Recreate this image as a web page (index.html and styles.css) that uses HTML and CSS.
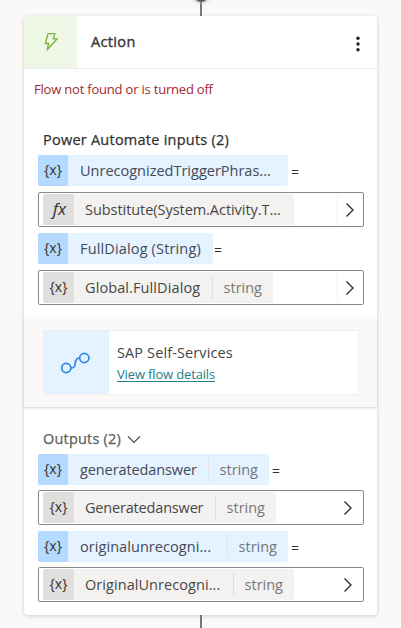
FILE: index.html
```html
<!DOCTYPE html>
<html lang="en">
<head>
<meta charset="utf-8">
<title>Action</title>
<link rel="stylesheet" href="styles.css">
</head>
<body>
<div class="connector top"></div>
<main class="card">
  <header class="header">
    <div class="header-icon">
      <svg width="16" height="20" viewBox="0 0 16 20"><path d="M5 1.6h7l-1.8 5.2h4L4.1 17.8l1.6-6.3H2.3z" fill="none" stroke="#76b43c" stroke-width="1.3" stroke-linejoin="round"/></svg>
    </div>
    <h1 class="title"><span class="t-action">Action</span></h1>
    <svg class="more" width="6" height="18" viewBox="0 0 6 18"><circle cx="3" cy="3.3" r="1.7"/><circle cx="3" cy="9" r="1.7"/><circle cx="3" cy="14.7" r="1.7"/></svg>
  </header>
  <p class="error"><span class="t-error">Flow not found or is turned off</span></p>
  <section class="inputs">
    <h2 class="heading"><span class="t-inputs">Power Automate inputs (2)</span></h2>
    <div class="param"><div class="token w250"><i class="var">{x}</i><span class="label t-unrec">UnrecognizedTriggerPhras...</span></div><span class="equals">=</span></div>
    <div class="field"><div class="token gray w251"><i class="var fx">fx</i><span class="label t-subst">Substitute(System.Activity.T...</span></div><div class="open"><svg width="10" height="16" viewBox="0 0 10 16"><path d="M1.5 1.5L8 8l-6.5 6.5"/></svg></div></div>
    <div class="param"><div class="token w175"><i class="var">{x}</i><span class="label t-full">FullDialog (String)</span></div><span class="equals near">=</span></div>
    <div class="field"><div class="token gray w230"><i class="var">{x}</i><span class="label t-global">Global.FullDialog</span><span class="type">string</span></div><div class="open"><svg width="10" height="16" viewBox="0 0 10 16"><path d="M1.5 1.5L8 8l-6.5 6.5"/></svg></div></div>
  </section>
  <section class="band">
    <div class="flow">
      <div class="flow-icon"><svg width="32" height="26" viewBox="0 0 32 26"><g fill="none" stroke="#2b88e8" stroke-width="1.7"><circle cx="6.3" cy="18" r="4.6"/><circle cx="24.3" cy="8" r="4.6"/><path d="M10.900 18c4.700 0 4-3 4.300-5s.500-5 4.500-5"/></g></svg></div>
      <div class="flow-text"><div class="flow-name"><span class="t-sap">SAP Self-Services</span></div><a class="link"><span class="t-view">View flow details</span></a></div>
    </div>
  </section>
  <section class="outputs">
    <h2 class="heading muted"><span class="t-outputs">Outputs (2)</span><svg width="14" height="9" viewBox="0 0 14 9"><path d="M1 1.300l6 6 6-6"/></svg></h2>
    <div class="param"><div class="token w231"><i class="var">{x}</i><span class="label t-gen">generatedanswer</span><span class="type">string</span></div><span class="equals">=</span></div>
    <div class="field"><div class="token gray w233"><i class="var">{x}</i><span class="label t-gen2">Generatedanswer</span><span class="type">string</span></div><div class="open"><svg width="10" height="16" viewBox="0 0 10 16"><path d="M1.5 1.5L8 8l-6.5 6.5"/></svg></div></div>
    <div class="param"><div class="token w250"><i class="var">{x}</i><span class="label t-orig">originalunrecogni...</span><span class="type">string</span></div><span class="equals">=</span></div>
    <div class="field"><div class="token gray w251"><i class="var">{x}</i><span class="label t-orig2">OriginalUnrecogni...</span><span class="type">string</span></div><div class="open"><svg width="10" height="16" viewBox="0 0 10 16"><path d="M1.5 1.5L8 8l-6.5 6.5"/></svg></div></div>
  </section>
</main>
<div class="connector bottom"></div>
</body>
</html>
```
FILE: styles.css
```css
* { box-sizing: border-box; }
body { margin: 0; height: 628px; overflow: hidden; background: #faf9f8; font-family: "Open Sans", "Noto Sans", sans-serif; font-size: 14.5px; line-height: 20px; color: #484644; display: flex; flex-direction: column; }
.connector { width: 2px; margin-left: 200px; background: #797775; flex: none; }
.top { height: 16px; position: relative; }
.top::before { content: ""; position: absolute; left: -7px; top: -14px; width: 16px; height: 16px; border-radius: 50%; background: #605e5c; box-shadow: 0 0 4px #aaa; }
.bottom { height: 13px; }
.card { width: 353px; height: 599px; margin-left: 24px; flex: none; background: #fff; border-radius: 4px; box-shadow: 0 1px 4px rgba(0,0,0,.18); display: flex; flex-direction: column; }
.header { height: 53px; border-bottom: 1px solid #edebe9; display: flex; align-items: center; flex: none; }
.header-icon { width: 53px; height: 52px; background: #eff8e6; border-radius: 4px 0 0 0; display: flex; align-items: center; justify-content: center; }
.title { margin: 0 0 0 14px; width: 262px; font-size: 14.5px; font-weight: 400; color: #3b3a39; -webkit-text-stroke: .4px #3b3a39; letter-spacing: .35px; }
.more { fill: #201f1e; margin-top: 3px; margin-left: 2px; }
.error { margin: 10px 0 0 10px; font-size: 13px; color: #a4262c; height: 20px; white-space: nowrap; letter-spacing: -.2px; }
.inputs { height: 218px; padding: 31px 0 0 14px; flex: none; }
.heading { margin: 0 0 5px 5px; height: 20px; font-size: 14.5px; font-weight: 400; color: #323130; display: flex; align-items: center; white-space: nowrap; letter-spacing: .24px; -webkit-text-stroke: .25px currentColor; }
.muted { color: #605e5c; letter-spacing: .2px; }
.heading svg { margin-left: 6px; fill: none; stroke: #484644; stroke-width: 1.2; }
.param { height: 31px; display: flex; align-items: center; }
.equals { margin-left: 3px; margin-top: 3px; font-size: 14px; color: #323130; }
.near { margin-left: 1px; }
.field { width: 326px; height: 35px; margin: 6px 0; padding-left: 4px; border: 1px solid #8a8886; border-radius: 2px; display: flex; align-items: center; justify-content: space-between; }
.token { height: 31px; display: flex; background: #e5f2ff; color: #434b55; border-radius: 2px; white-space: nowrap; line-height: 32px; overflow: hidden; }
.gray { background: #f3f2f1; color: #484644; }
.var { width: 30px; flex: none; text-align: center; background: #b5daff; color: #323130; font-style: normal; font-size: 14px; line-height: 29px; }
.gray .var { width: 31px; background: #e1dfdd; }
.gray .fx { font-style: italic; font-size: 17px; line-height: 30px; padding-left: 2px; }
.label { margin-left: 12px; }
.gray .label { margin-left: 11px; }
.type { margin-left: auto; padding: 0 11px; height: 23px; margin-top: 4px; line-height: 24px; border-left: 1px solid #e1e3e5; color: #72777d; }
.gray .type { border-color: #e1dfdd; color: #797775; }
.open { width: 26px; height: 31px; border-left: 1px solid #f3f2f1; display: flex; align-items: center; padding-left: 7px; }
.open svg { fill: none; stroke: #323130; stroke-width: 1.4; }
.t-subst { letter-spacing: -.05px; }
.t-full { letter-spacing: .15px; }
.t-global { letter-spacing: .1px; }
.t-gen { letter-spacing: -.1px; }
.t-gen2 { letter-spacing: -.18px; }
.t-orig, .t-orig2 { letter-spacing: .06px; }
.t-sap { letter-spacing: .12px; }
.t-view { letter-spacing: -.15px; }
.w250 { width: 250px; } .w251 { width: 251px; } .w175 { width: 175px; } .w230 { width: 230px; } .w231 { width: 231px; } .w233 { width: 233px; }
.band { height: 91px; flex: none; background: #faf9f8; border-bottom: 1px solid #e5e3e1; box-shadow: 0 1px 2px rgba(0,0,0,.1); padding: 13px 18px 0 19px; }
.flow { height: 65px; border: 1px solid #f0efed; background: #fff; display: flex; }
.flow-icon { width: 65px; background: #e5f2ff; display: flex; align-items: center; justify-content: center; padding-right: 1px; }
.flow-text { padding: 12px 0 0 8px; }
.flow-name { height: 21px; white-space: nowrap; }
.link { display: block; font-size: 13px; color: #247d8c; text-decoration: underline; text-underline-offset: 2px; white-space: nowrap; }
.outputs { padding: 21px 0 0 14px; }
.outputs .field { margin: 5px 0 6px; }
.outputs .open { border: 0; padding-left: 6px; }
```
